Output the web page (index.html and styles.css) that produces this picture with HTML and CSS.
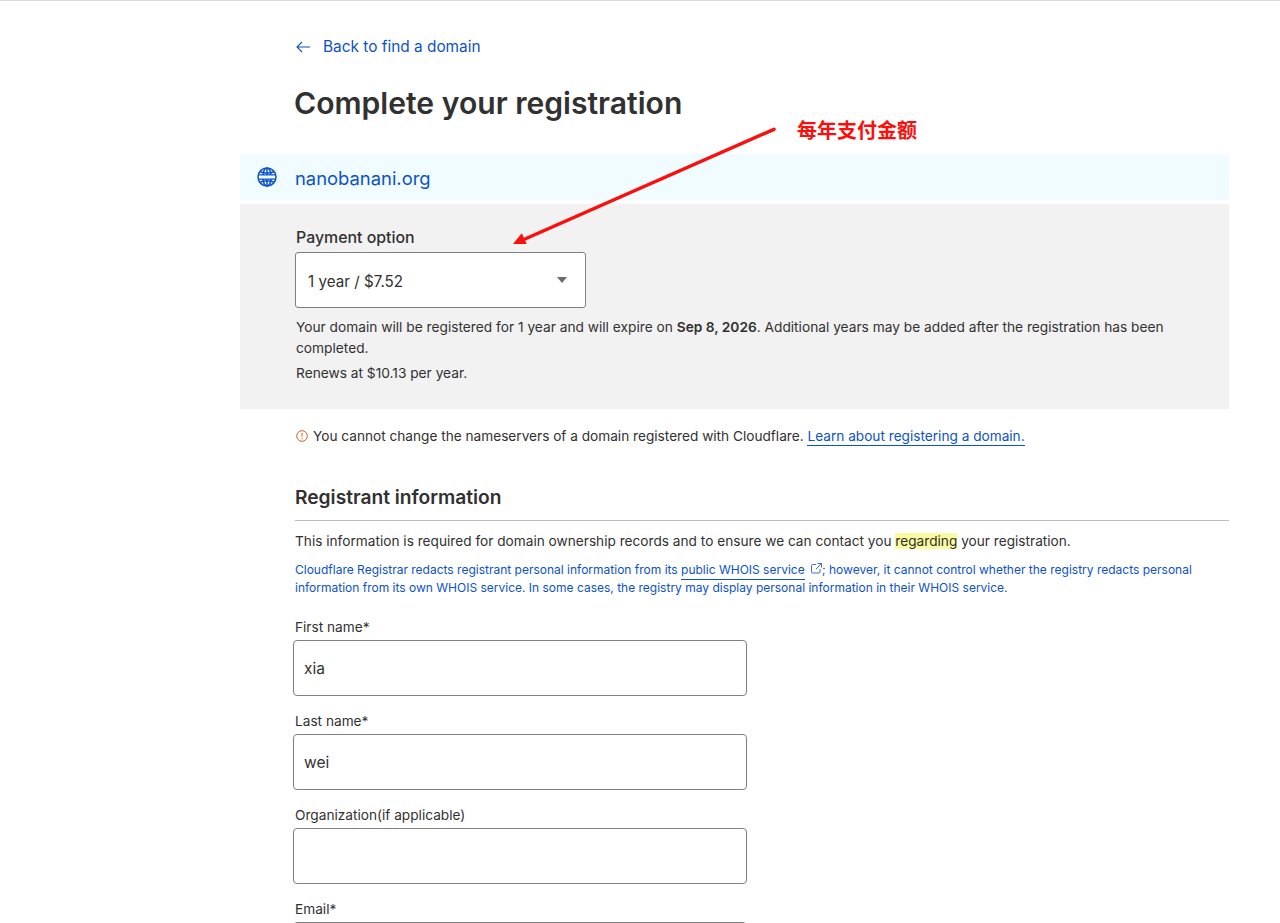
FILE: index.html
```html
<!DOCTYPE html>
<html lang="en">
<head>
    <meta charset="UTF-8">
    <title>Complete your registration</title>
    <link rel="stylesheet" href="styles.css">
</head>
<body>
    <div class="page">
        <a class="back" href="#">
            <svg class="back-icon" width="16" height="16" viewBox="0 0 16 16" fill="none" stroke="#0d52c7" stroke-width="1.1"><path d="M15 8H2M7 3L2 8l5 5"/></svg>
            <span>Back to find a domain</span>
        </a>
        <h1>Complete your registration</h1>

        <div class="domain-bar">
            <svg class="globe" width="20" height="20" viewBox="0 0 20 20" fill="none" stroke="#0d52c7" stroke-width="1.5">
                <circle cx="10" cy="10" r="9"/>
                <ellipse cx="10" cy="10" rx="4.2" ry="9"/>
                <path d="M10 1v18M3 4.800c4 1.600 10 1.600 14 0M3 15.200c4-1.600 10-1.600 14 0"/>
                <rect x="2" y="8" width="16" height="4" fill="#f0fcff" stroke="none"/>
                <path d="M1 7.900h18M1 12.100h18" stroke-width="1.300"/>
            </svg>
            <span class="domain-name">nanobanani.org</span>
        </div>

        <div class="payment">
            <label class="payment-label">Payment option</label>
            <div class="select">
                <span class="select-value">1 year / $7.52</span>
                <i class="caret"></i>
            </div>
            <p class="payment-note">Your domain will be registered for 1 year and will expire on <b>Sep 8, 2026</b>. Additional years may be added after the registration has been completed.</p>
            <p class="renew">Renews at $10.13 per year.</p>
        </div>

        <p class="warning">
            <svg width="12" height="12" viewBox="0 0 12 12" fill="none" stroke="#c9641f"><circle cx="6" cy="6" r="5.300"/><path d="M6 2.800v3.900M6 8v1.200"/></svg>
            <span>You cannot change the nameservers of a domain registered with Cloudflare. <a href="#">Learn about registering a domain.</a></span>
        </p>

        <h2>Registrant information</h2>
        <p class="intro">This information is required for domain ownership records and to ensure we can contact you <mark>regarding</mark> your registration.</p>
        <p class="whois">Cloudflare Registrar redacts registrant personal information from its <a href="#">public WHOIS service</a>
            <svg width="11" height="11" viewBox="0 0 11 11" fill="none" stroke="#0d52c7" stroke-width="0.8"><path d="M5 1.500H1.500a1 1 0 0 0-1 1v6.500a1 1 0 0 0 1 1H8a1 1 0 0 0 1-1V6M6.500.5h4v4M10.500.5L5 6"/></svg>; however, it cannot control whether the registry redacts personal information from its own WHOIS service. In some cases, the registry may display personal information in their WHOIS service.</p>

        <div class="field">
            <label>First name*</label>
            <div class="input">xia</div>
        </div>
        <div class="field">
            <label>Last name*</label>
            <div class="input">wei</div>
        </div>
        <div class="field">
            <label>Organization(if applicable)</label>
            <div class="input"></div>
        </div>
        <div class="field">
            <label>Email*</label>
            <div class="input"></div>
        </div>
    </div>

    <!-- screenshot annotation on top of the page -->
    <svg class="arrow" width="280" height="130" viewBox="0 0 280 130" fill="none">
        <path d="M263 10.300L14 120" stroke="#fb0f0c" stroke-width="3.500" stroke-linecap="round"/>
        <path d="M2 125L10.700 114.300L13 119L15.700 125Z" fill="#fb0f0c"/>
    </svg>
    <div class="note">每年支付金额</div>
</body>
</html>
```

FILE: styles.css
```css
html, body{
    margin: 0;
    height: 923px;
    overflow: hidden;
}

body{
    font-family: Inter, "Liberation Sans", sans-serif;
    color: #313131;
    background-color: #fff;
    border-top: 1px solid #d9d9d9;
    box-sizing: border-box;
    position: relative;
}

p{
    margin: 0;
}

a{
    color: #0d52c7;
    text-decoration: none;
}

.page{
    margin-left: 240px;
    width: 989px;
    height: 922px;
    overflow: hidden;
}

.back{
    display: flex;
    align-items: center;
    gap: 12px;
    margin-left: 55px;
    padding-top: 36px;
    height: 20px;
    font-size: 15.400px;
    line-height: 20px;
}

.back-icon{
    flex: none;
}

h1{
    margin: 27px 0 0 54px;
    font-size: 30.100px;
    line-height: 38px;
    font-weight: 600;
}

.domain-bar{
    display: flex;
    align-items: center;
    margin-top: 32px;
    height: 46px;
    background-color: #f0fcff;
    color: #0d52c7;
    font-size: 18.400px;
}

.domain-name{
    margin-top: 2px;
}

.globe{
    margin-left: 17px;
    margin-right: 18px;
}

.payment{
    margin-top: 4px;
    padding: 24px 55px 24px;
    background-color: #f2f2f2;
    height: 157px;
}

.payment-label{
    display: block;
    margin-left: 1px;
    font-size: 15.900px;
    font-weight: 500;
    line-height: 19px;
}

.select{
    display: flex;
    align-items: center;
    justify-content: space-between;
    box-sizing: border-box;
    margin-top: 5px;
    width: 291px;
    height: 56px;
    padding: 0 18px 0 12px;
    background-color: #fff;
    border: 1px solid #808080;
    border-radius: 3px;
    font-size: 15.200px;
}

.select-value{
    margin-top: 2px;
}

.caret{
    border-left: 5.500px solid transparent;
    border-right: 5.500px solid transparent;
    border-top: 6px solid #6d6d6d;
}

.payment-note{
    margin: 9px 0 0 1px;
    font-size: 13.720px;
    line-height: 21px;
}

.payment-note b{
    font-weight: 600;
}

.renew{
    margin: 4px 0 0 1px;
    font-size: 13.720px;
    line-height: 21px;
}

.warning{
    display: flex;
    align-items: center;
    gap: 5px;
    margin: 17px 0 0 56px;
    font-size: 13.650px;
    line-height: 20px;
}

.warning a{
    border-bottom: 1px solid #0d52c7;
    padding-bottom: 1px;
}

h2{
    margin: 37px 0 0 55px;
    padding-bottom: 9px;
    font-size: 19.200px;
    line-height: 28px;
    font-weight: 600;
    border-bottom: 1px solid #bdbdbd;
}

.intro{
    margin: 10px 0 0 55px;
    font-size: 13.660px;
    line-height: 20px;
}

mark{
    background-color: #fafa9e;
    color: inherit;
}

.whois{
    margin: 10px 0 0 55px;
    width: 920px;
    font-size: 12px;
    line-height: 18px;
    color: #0d52c7;
}

.whois a{
    border-bottom: 1px solid #0d52c7;
    padding-bottom: 2px;
}

.whois svg{
    margin-left: 3px;
}

.field{
    margin: 0 0 0 53px;
    padding-top: 16px;
}

.whois + .field{
    padding-top: 21px;
}

.field label{
    display: block;
    margin-left: 2px;
    font-size: 13.660px;
    line-height: 18px;
}

.input{
    box-sizing: border-box;
    margin-top: 4px;
    width: 454px;
    height: 56px;
    padding-left: 10px;
    background-color: #fff;
    border: 1px solid #808080;
    border-radius: 4px;
    font-size: 15.500px;
    line-height: 55px;
}

.arrow{
    position: absolute;
    left: 511px;
    top: 118px;
}

.note{
    position: absolute;
    left: 797px;
    top: 117px;
    font-family: "Noto Sans CJK SC", sans-serif;
    font-size: 20px;
    line-height: 24px;
    font-weight: 700;
    color: #fb0f0c;
}
```
